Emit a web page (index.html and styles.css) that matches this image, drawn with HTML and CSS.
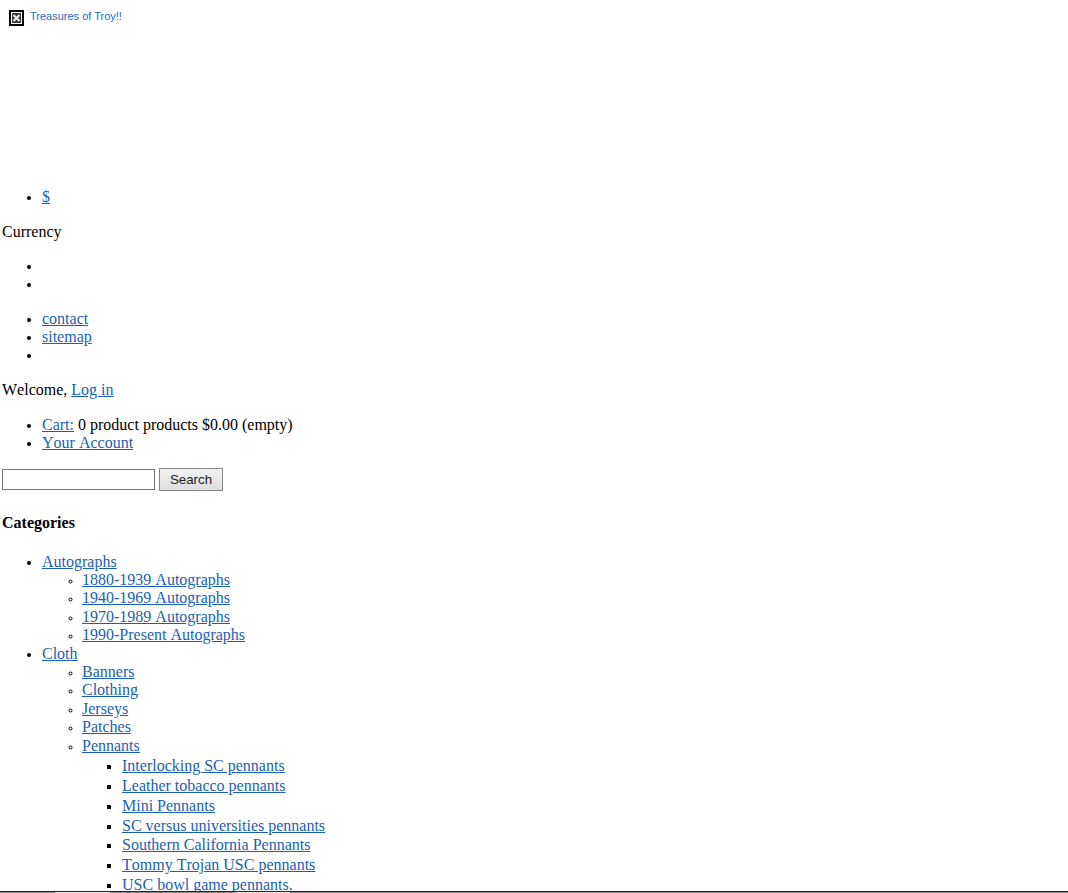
FILE: index.html
```html
<!DOCTYPE html>
<html lang="en">
<head>
<meta charset="utf-8">
<title>Treasures of Troy!!</title>
<link rel="stylesheet" href="styles.css">
</head>
<body>
<header class="logo-block">
  <a class="logo" href="#">
    <svg class="broken" width="15" height="16" viewBox="0 0 15 16" aria-hidden="true">
      <rect x="1" y="1" width="13" height="14" fill="#fff" stroke="#000" stroke-width="2"/>
      <rect x="3" y="3" width="9" height="10" fill="#333"/>
      <path d="M4.5 5l6 6M10.5 5l-6 6" stroke="#e8e8e8" stroke-width="2.2"/>
    </svg>
    <span>Treasures of Troy!!</span>
  </a>
</header>
<ul class="list"><li><a href="#">$</a></li></ul>
<p class="para">Currency</p>
<ul class="list"><li>&nbsp;</li><li>&nbsp;</li></ul>
<ul class="list"><li><a href="#">contact</a></li><li><a href="#">sitemap</a></li><li>&nbsp;</li></ul>
<p class="para welcome">Welcome, <a href="#">Log in</a></p>
<ul class="list cart"><li><a href="#">Cart:</a> 0 product products $0.00 (empty)</li><li><a href="#">Your Account</a></li></ul>
<form class="search"><input class="search-input" type="text"><button class="search-btn" type="button">Search</button></form>
<h4 class="cat-title">Categories</h4>
<ul class="list">
  <li><a href="#">Autographs</a>
    <ul class="sub">
      <li><a href="#">1880-1939 Autographs</a></li>
      <li><a href="#">1940-1969 Autographs</a></li>
      <li><a href="#">1970-1989 Autographs</a></li>
      <li><a href="#">1990-Present Autographs</a></li>
    </ul>
  </li>
  <li><a href="#">Cloth</a>
    <ul class="sub">
      <li><a href="#">Banners</a></li>
      <li><a href="#">Clothing</a></li>
      <li><a href="#">Jerseys</a></li>
      <li><a href="#">Patches</a></li>
      <li><a href="#">Pennants</a>
        <ul class="subsub">
          <li><a href="#">Interlocking SC pennants</a></li>
          <li><a href="#">Leather tobacco pennants</a></li>
          <li><a href="#">Mini Pennants</a></li>
          <li><a href="#">SC versus universities pennants</a></li>
          <li><a href="#">Southern California Pennants</a></li>
          <li><a href="#">Tommy Trojan USC pennants</a></li>
          <li><a href="#">USC bowl game pennants.</a></li>
        </ul>
      </li>
    </ul>
  </li>
</ul>
<div class="bottom-bar"></div>
</body>
</html>
```
FILE: styles.css
```css
html, body { margin: 0; padding: 0; height: 893px; overflow: hidden; background: #fff; }
body { font-family: "Liberation Serif", "Times New Roman", serif; font-size: 16px; color: #000; position: relative; font-kerning: none; }
a { color: #1a5fb4; }
.logo-block { height: 188.4px; padding: 8px 0 0 9px; box-sizing: border-box; }
.logo { display: flex; align-items: flex-start; gap: 6px; font: 11px/16px "Liberation Sans", Arial, sans-serif; text-decoration: none; color: #2a6ac0; }
.broken { flex: none; margin-top: 2px; }
.list { margin: 0 0 16px; padding-left: 42px; }
.list li { line-height: 18.4px; }
.list li::marker { font-size: 13px; }
.para { margin: 16px 2px; }
.welcome { margin-bottom: 17px; }
.cart { margin-bottom: 14.4px; }
.search { display: flex; align-items: center; gap: 4px; margin: 0 2px; height: 24px; }
.search-input { width: 153px; height: 21px; box-sizing: border-box; border: 1px solid #767676; padding: 0; background: #fff; }
.search-btn { width: 64px; height: 23px; box-sizing: border-box; border: 1px solid #8a8a8a; background: linear-gradient(#f2f2f2, #dedede); font: 13.33px "Liberation Sans", Arial, sans-serif; color: #222; padding: 0; }
.cat-title { font-size: 16px; margin: 22.7px 2px 20.8px; }
.sub { padding-left: 40px; margin: 0; list-style: circle; }
.list .sub li::marker { font-size: 10px; }
.subsub { padding-left: 40px; margin: 1.2px 0 0; list-style: square; }
.subsub li { line-height: 19.8px; }
.list .subsub li::marker { font-size: 14px; }
.bottom-bar {
  position: absolute; left: 0; right: 0; top: 891px; height: 2px;
  background:
    linear-gradient(#222 1px, transparent 1px),
    linear-gradient(90deg, #8c8c8c 55px, #ececec 55px, #ececec 110px, #8c8c8c 110px, #8c8c8c 235px, #ececec 235px, #ececec 290px, #8c8c8c 290px);
}
```
